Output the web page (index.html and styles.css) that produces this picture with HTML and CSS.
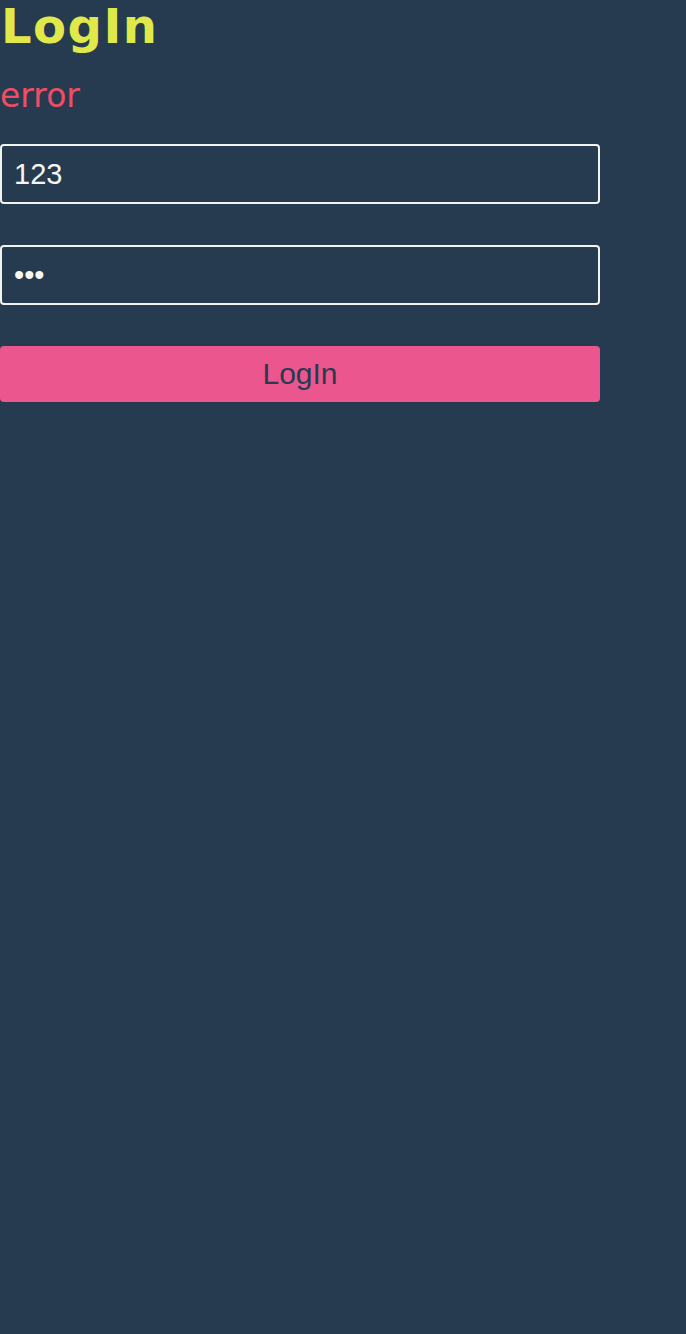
FILE: index.html
```html
<!DOCTYPE html>
<html>
<head>
<meta charset="utf-8">
<link rel="stylesheet" href="styles.css">
</head>
<body>
<div class="page">
  <h1 class="title">LogIn</h1>
  <p class="error">error</p>
  <form class="form">
    <input class="field" type="text" value="123">
    <input class="field" type="password" value="123">
    <button class="btn" type="button">LogIn</button>
  </form>
</div>
</body>
</html>
```
FILE: styles.css
```css
html, body {
  margin: 0;
  padding: 0;
  background: #263b50;
  height: 100%;
}
.page {
  width: 600px;
}
.title {
  margin: 0;
  padding-left: 1px;
  font-family: "DejaVu Sans", Verdana, sans-serif;
  font-weight: bold;
  font-size: 48px;
  line-height: 52px;
  letter-spacing: 1.5px;
  color: #e1e84a;
}
.error {
  margin: 24px 0 0;
  font-family: "DejaVu Sans", Verdana, sans-serif;
  font-size: 33px;
  line-height: 40px;
  color: #f04d64;
}
.form {
  display: flex;
  flex-direction: column;
  gap: 41px;
  margin-top: 28px;
}
.field {
  box-sizing: border-box;
  width: 600px;
  height: 60px;
  margin: 0;
  padding: 0 12px;
  border: 2px solid #f2f2ee;
  border-radius: 4px;
  background: #263b50;
  color: #f7f7f2;
  font-family: "Liberation Sans", Arial, sans-serif;
  font-size: 29px;
  outline: none;
}
.btn {
  box-sizing: border-box;
  width: 600px;
  height: 56px;
  margin: 0;
  border: none;
  border-radius: 4px;
  background: #ec568e;
  color: #263b50;
  font-family: "Liberation Sans", Arial, sans-serif;
  font-size: 30px;
}
```
